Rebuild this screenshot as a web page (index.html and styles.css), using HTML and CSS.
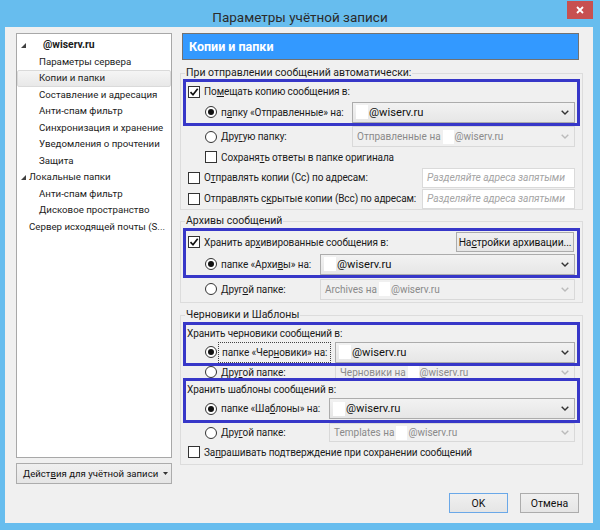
FILE: index.html
```html
<!DOCTYPE html>
<html lang="ru">
<head>
<meta charset="utf-8">
<title>Параметры учётной записи</title>
<link rel="stylesheet" href="styles.css">
</head>
<body>
<div class="window">
  <div class="titlebar">
    <div class="title">Параметры учётной записи</div>
    <div class="close"><svg width="8" height="8" viewBox="0 0 8 8"><path d="M1 1L7 7M7 1L1 7" stroke="#fff" stroke-width="1.8"/></svg></div>
  </div>
  <div class="client">
    <div class="main">
      <div class="left">
        <div class="tree">
          <div class="node root"><svg class="tri" width="5" height="5" viewBox="0 0 5 5"><path d="M5 0V5H0Z" fill="#404040"/></svg><b class="acct">@wiserv.ru</b></div>
          <div class="node sub">Параметры сервера</div>
          <div class="node sub selected">Копии и папки</div>
          <div class="node sub">Составление и адресация</div>
          <div class="node sub">Анти-спам фильтр</div>
          <div class="node sub">Синхронизация и хранение</div>
          <div class="node sub">Уведомления о прочтении</div>
          <div class="node sub">Защита</div>
          <div class="node root2"><svg class="tri" width="5" height="5" viewBox="0 0 5 5"><path d="M5 0V5H0Z" fill="#404040"/></svg><span>Локальные папки</span></div>
          <div class="node sub">Анти-спам фильтр</div>
          <div class="node sub">Дисковое пространство</div>
          <div class="node top">Сервер исходящей почты (S...</div>
        </div>
        <div class="btn actions"><span>Дейст<u>в</u>ия для учётной записи</span><svg width="5" height="3" viewBox="0 0 5 3"><path d="M0 0H5L2.5 3Z" fill="#333"/></svg></div>
      </div>
      <div class="right">
        <div class="header">Копии и папки</div>

        <fieldset class="group g1">
          <legend>При отправлении сообщений автоматически:</legend>
          <div class="mark m1">
            <div class="row h19"><span class="cb on"><svg width="10" height="10" viewBox="0 0 10 10"><path d="M1.5 5.2L4 7.8L8.7 1.8" fill="none" stroke="#111" stroke-width="1.7"/></svg></span><span class="lbl">По<u>м</u>ещать копию сообщения в:</span></div>
            <div class="row h22 ind"><span class="rb on"></span><span class="lbl">п<u>а</u>пку «Отправленные» на:</span>
              <div class="select w-sent"><span class="redact"></span>@wiserv.ru<svg class="chev" width="8" height="5" viewBox="0 0 8 5"><path d="M0.7 0.7L4 4L7.3 0.7" fill="none" stroke="#333" stroke-width="1.4"/></svg></div></div>
          </div>
          <div class="row h21 ind pad"><span class="rb"></span><span class="lbl">Дру<u>г</u>ую папку:</span>
            <div class="select dis w-sent">Отправленные на <span class="redact"></span>@wiserv.ru<svg class="chev" width="8" height="5" viewBox="0 0 8 5"><path d="M0.7 0.7L4 4L7.3 0.7" fill="none" stroke="#bbb" stroke-width="1.4"/></svg></div></div>
          <div class="row h20 ind pad"><span class="cb"></span><span class="lbl">Сохраня<u>т</u>ь ответы в папке оригинала</span></div>
          <div class="row h21 pad"><span class="cb"></span><span class="lbl">О<u>т</u>правлять копии (Cc) по адресам:</span><div class="input">Разделяйте адреса запятыми</div></div>
          <div class="row h21 pad"><span class="cb"></span><span class="lbl">Отправлять с<u>к</u>рытые копии (Bcc) по адресам:</span><div class="input">Разделяйте адреса запятыми</div></div>
        </fieldset>

        <fieldset class="group g2">
          <legend>Архивы сообщений</legend>
          <div class="mark m2">
            <div class="row h22"><span class="cb on"><svg width="10" height="10" viewBox="0 0 10 10"><path d="M1.5 5.2L4 7.8L8.7 1.8" fill="none" stroke="#111" stroke-width="1.7"/></svg></span><span class="lbl">Хранить ар<u>х</u>ивированные сообщения в:</span><div class="btn arch"><span>На<u>с</u>тройки архивации...</span></div></div>
            <div class="row h22 ind"><span class="rb on"></span><span class="lbl">папке «Архи<u>в</u>ы» на:</span>
              <div class="select w-arch"><span class="redact"></span>@wiserv.ru<svg class="chev" width="8" height="5" viewBox="0 0 8 5"><path d="M0.7 0.7L4 4L7.3 0.7" fill="none" stroke="#333" stroke-width="1.4"/></svg></div></div>
          </div>
          <div class="row h22 ind pad"><span class="rb"></span><span class="lbl">Друг<u>о</u>й папке:</span>
            <div class="select dis w-arch">Archives на <span class="redact"></span>@wiserv.ru<svg class="chev" width="8" height="5" viewBox="0 0 8 5"><path d="M0.7 0.7L4 4L7.3 0.7" fill="none" stroke="#bbb" stroke-width="1.4"/></svg></div></div>
        </fieldset>

        <fieldset class="group g3">
          <legend>Черновики и Шаблоны</legend>
          <div class="mark m3">
            <div class="row h16 text">Хранить черновики сообщений в:</div>
            <div class="row h22 ind"><span class="rb on"></span><span class="lbl focus">папке «Чер<u>н</u>овики» на:</span>
              <div class="select w-draft"><span class="redact"></span>@wiserv.ru<svg class="chev" width="8" height="5" viewBox="0 0 8 5"><path d="M0.7 0.7L4 4L7.3 0.7" fill="none" stroke="#333" stroke-width="1.4"/></svg></div></div>
          </div>
          <div class="row h12 ind pad clip"><span class="rb"></span><span class="lbl">Дру<u>г</u>ой папке:</span>
            <div class="select dis w-draft sh12">Черновики на <span class="redact"></span>@wiserv.ru<svg class="chev" width="8" height="5" viewBox="0 0 8 5"><path d="M0.7 0.7L4 4L7.3 0.7" fill="none" stroke="#bbb" stroke-width="1.4"/></svg></div></div>
          <div class="mark m4">
            <div class="row h16 text">Хранить шаблоны сообщений в:</div>
            <div class="row h23 ind"><span class="rb on"></span><span class="lbl">папке «Ша<u>б</u>лоны» на:</span>
              <div class="select w-tpl"><span class="redact"></span>@wiserv.ru<svg class="chev" width="8" height="5" viewBox="0 0 8 5"><path d="M0.7 0.7L4 4L7.3 0.7" fill="none" stroke="#333" stroke-width="1.4"/></svg></div></div>
          </div>
          <div class="row h19 ind pad"><span class="rb"></span><span class="lbl">Дру<u>г</u>ой папке:</span>
            <div class="select dis w-tpl sh19">Templates на <span class="redact"></span>@wiserv.ru<svg class="chev" width="8" height="5" viewBox="0 0 8 5"><path d="M0.7 0.7L4 4L7.3 0.7" fill="none" stroke="#bbb" stroke-width="1.4"/></svg></div></div>
          <div class="row h20 pad"><span class="cb"></span><span class="lbl">За<u>п</u>рашивать подтверждение при сохранении сообщений</span></div>
        </fieldset>
      </div>
    </div>
    <div class="footer">
      <div class="btn dlg ok">OK</div>
      <div class="btn dlg">Отмена</div>
    </div>
  </div>
</div>
</body>
</html>
```
FILE: styles.css
```css
* { box-sizing: border-box; }
html, body { margin: 0; padding: 0; }
body {
  width: 600px;
  height: 530px;
  overflow: hidden;
  background: #67bdee;
  font-family: Roboto, "Noto Sans", sans-serif;
  font-size: 10px;
  color: #1b1b1b;
}
u { text-decoration: underline; text-decoration-thickness: 1px; text-underline-offset: 1px; }

.window { height: 530px; display: flex; flex-direction: column; }

.titlebar {
  height: 27px;
  display: grid;
  grid-template-columns: 1fr auto 1fr;
  align-items: start;
}
.title {
  grid-column: 2;
  font-size: 13.5px;
  line-height: 18px;
  margin-top: 8px;
  color: #2b2b2b;
}
.close {
  grid-column: 3;
  justify-self: end;
  width: 26px;
  height: 18px;
  margin: 1px 7px 0 0;
  background: #c75050;
  display: flex;
  align-items: center;
  justify-content: center;
}

.client {
  flex: 1;
  margin: 0 7px 7px 5px;
  background: #f0f0f0;
  padding: 6px 10px 10px 11px;
  display: flex;
  flex-direction: column;
}
.main { display: flex; height: 451px; }

.left { width: 156px; display: flex; flex-direction: column; }
.tree {
  height: 425px;
  background: #fff;
  border: 1px solid #a8a8a8;
  padding-top: 3px;
  font-size: 9.7px;
}
.node {
  height: 16.5px;
  line-height: 16.5px;
  white-space: nowrap;
  display: flex;
  align-items: center;
}
.node .tri { margin-left: 4px; }
.root .acct { margin-left: 17px; font-weight: bold; font-size: 10.4px; }
.root2 span { margin-left: 3px; }
.sub { padding-left: 22px; }
.top { padding-left: 12px; }
.selected {
  background: linear-gradient(#f5f5f5, #e8e8e8);
  border: 1px solid #dadada;
  border-radius: 2px;
  padding-left: 21px;
}

.btn {
  border: 1px solid #acacac;
  background: linear-gradient(#f0f0f0, #e5e5e5);
  display: flex;
  align-items: center;
  justify-content: center;
  color: #111;
  white-space: nowrap;
}
.actions {
  margin-top: 5px;
  height: 21px;
  justify-content: flex-start;
  padding-left: 6px;
  gap: 5px;
  font-size: 9.6px;
}

.right { margin-left: 8px; width: 403px; font-size: 10px; letter-spacing: -0.1px; }
.header {
  margin: 0 4px 0 2px;
  height: 27px;
  background: #3399ff;
  border: 1px solid #727272;
  color: #fff;
  font-weight: bold;
  font-size: 12.5px;
  letter-spacing: 0;
  line-height: 25px;
  padding-left: 6px;
}

.group {
  min-width: 0;
  border: 1px solid #dcdcdc;
  margin: 0;
  padding: 0 2px;
}
.group legend {
  padding: 0 1px;
  margin-left: 2px;
  line-height: 14px;
  font-size: 10.5px;
  letter-spacing: 0;
}
.group.g1 { margin-top: 6px; }
.group.g2 { margin-top: 4px; padding-bottom: 2px; }
.group.g3 { margin-top: 5px; padding-bottom: 2px; }

.mark { border: 3px solid #3737c8; }
.m1 { margin-top: -1px; }

.row {
  display: flex;
  align-items: center;
  white-space: nowrap;
}
.pad { padding: 0 3px; }
.h12 { height: 12px; }
.h16 { height: 16px; }
.h19 { height: 19px; }
.h20 { height: 20px; }
.h21 { height: 21px; }
.h22 { height: 22px; }
.h23 { height: 23px; }
.text { padding-left: 1px; }
.clip { overflow: hidden; }

.cb {
  width: 12px;
  height: 12px;
  flex: none;
  border: 1px solid #333;
  background: #fff;
  margin-left: 2px;
  display: flex;
  align-items: center;
  justify-content: center;
}
.ind .cb, .ind .rb { margin-left: 19px; }
.rb {
  width: 12px;
  height: 12px;
  flex: none;
  border: 1px solid #333;
  border-radius: 50%;
  background: #fff;
  display: flex;
  align-items: center;
  justify-content: center;
}
.rb.on::after {
  content: "";
  width: 6px;
  height: 6px;
  border-radius: 50%;
  background: #111;
}
.lbl { margin-left: 4px; }
.focus {
  margin-left: 1px;
  padding: 0 3px;
  height: 21px;
  line-height: 19px;
  border: 1px dotted #444;
}

.select {
  margin-left: auto;
  margin-right: 2px;
  height: 21px;
  border: 1px solid #acacac;
  background: linear-gradient(#f2f2f2, #e6e6e6);
  display: flex;
  align-items: center;
  padding-left: 3px;
  font-size: 11.2px;
  letter-spacing: 0;
  color: #111;
  flex: none;
}
.select .chev { margin-left: auto; margin-right: 5px; }
.select.dis {
  background: #f0f0f0;
  border-color: #d9d9d9;
  color: #8a8a8a;
  padding-left: 4px;
  font-size: 10px;
}
.sh19 { height: 19px; }
.sh12 { height: 12px; border-top: none; border-bottom: none; }
.redact {
  display: inline-block;
  width: 12px;
  height: 14px;
  background: #fff;
  margin-right: 1px;
}
.select.dis .redact { margin-left: 2px; width: 11px; }
.w-sent { width: 223px; }
.w-arch { width: 255px; }
.w-draft { width: 240px; }
.w-tpl { width: 246px; }

.input {
  margin-left: auto;
  margin-right: 2px;
  width: 153px;
  height: 20px;
  border: 1px solid #dadada;
  background: #fff;
  color: #a5a5a5;
  font-style: italic;
  font-size: 10.3px;
  padding-left: 4px;
  line-height: 18px;
  flex: none;
  overflow: hidden;
}
.arch {
  margin-left: auto;
  margin-right: 3px;
  width: 118px;
  height: 20px;
  font-size: 10.3px;
}

.footer {
  display: flex;
  justify-content: flex-end;
  gap: 12px;
  margin-top: 9px;
  padding-right: 4px;
}
.dlg { width: 59px; height: 20px; font-size: 10.5px; }
.ok { border-color: #6aa8e8; }
```
